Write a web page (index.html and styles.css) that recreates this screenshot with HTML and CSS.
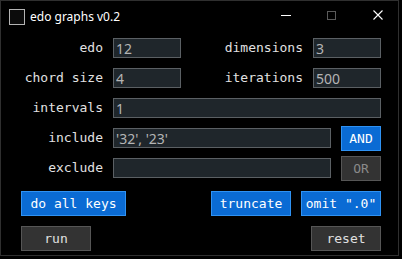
FILE: index.html
```html
<!DOCTYPE html>
<html>
<head>
<meta charset="utf-8">
<link rel="stylesheet" href="styles.css">
</head>
<body>
<div class="window">
  <div class="titlebar">
    <span class="app-icon"></span>
    <span class="title">edo graphs v0.2</span>
    <div class="controls">
      <svg class="ctl" width="10" height="10" viewBox="0 0 10 10"><line x1="0" y1="5.5" x2="10" y2="5.5" stroke="#ffffff" stroke-width="1"/></svg>
      <svg class="ctl" width="10" height="10" viewBox="0 0 10 10"><rect x="0.5" y="1.5" width="8" height="8" fill="none" stroke="#5a5a5a" stroke-width="1"/></svg>
      <svg class="ctl" width="10" height="10" viewBox="0 0 10 10"><path d="M0.5 0.5 L9.5 9.5 M9.5 0.5 L0.5 9.5" stroke="#ffffff" stroke-width="1.1" fill="none"/></svg>
    </div>
  </div>
  <div class="content">
    <div class="form-row">
      <label class="lbl">edo</label>
      <input class="field" type="text" value="12">
      <label class="lbl">dimensions</label>
      <input class="field" type="text" value="3">
    </div>
    <div class="form-row">
      <label class="lbl">chord size</label>
      <input class="field" type="text" value="4">
      <label class="lbl">iterations</label>
      <input class="field" type="text" value="500">
    </div>
    <div class="form-row">
      <label class="lbl">intervals</label>
      <input class="field wide" type="text" value="1">
    </div>
    <div class="form-row">
      <label class="lbl">include</label>
      <div class="combo">
        <input class="field grow" type="text" value="'32', '23'">
        <button class="btn blue small">AND</button>
      </div>
    </div>
    <div class="form-row">
      <label class="lbl">exclude</label>
      <div class="combo">
        <input class="field grow" type="text" value="">
        <button class="btn gray small dim">OR</button>
      </div>
    </div>
    <div class="btn-row first">
      <button class="btn blue keys">do all keys</button>
      <div class="btn-group">
        <button class="btn blue opt">truncate</button>
        <button class="btn blue opt">omit ".0"</button>
      </div>
    </div>
    <div class="btn-row">
      <button class="btn gray act">run</button>
      <button class="btn gray act">reset</button>
    </div>
  </div>
</div>
</body>
</html>
```
FILE: styles.css
```css
* { box-sizing: border-box; }
html, body { margin: 0; padding: 0; background: #000; }
.window {
  width: 399px;
  height: 256px;
  border: 1px solid #2f2f2f;
  background: #000;
  display: flex;
  flex-direction: column;
}
.titlebar {
  height: 32px;
  display: flex;
  align-items: center;
  padding-left: 8px;
}
.app-icon {
  width: 16px;
  height: 16px;
  border: 1px solid #b4b4b4;
  background: #0c0c0c;
}
.title {
  margin-left: 5px;
  font-family: "Noto Sans", "Open Sans", sans-serif;
  font-size: 12px;
  color: #ffffff;
  margin-top: -1px;
}
.controls {
  margin-left: auto;
  align-self: flex-start;
  display: flex;
  gap: 36px;
  padding-top: 9px;
  padding-right: 15px;
}
.ctl { display: block; }
.content {
  padding: 5px 17px 0 10px;
  display: flex;
  flex-direction: column;
  gap: 10px;
}
.form-row {
  display: grid;
  grid-template-columns: 92px 68px 112px 68px;
  column-gap: 10px;
  height: 20px;
  align-items: center;
}
.lbl {
  font-family: "DejaVu Sans Mono", monospace;
  font-size: 13px;
  color: #e2e2e2;
  text-align: right;
  line-height: 20px;
}
.field {
  height: 20px;
  width: 100%;
  border: 1px solid #5b6064;
  background: #1f262b;
  color: #b4b4b4;
  font-family: "Noto Sans", "Open Sans", sans-serif;
  font-size: 14px;
  padding: 0 2px;
  outline: none;
  margin: 0;
}
.wide { grid-column: 2 / 5; }
.combo {
  grid-column: 2 / 5;
  display: flex;
  align-items: center;
  gap: 10px;
  height: 20px;
}
.grow { flex: 1; }
.btn {
  font-family: "DejaVu Sans Mono", monospace;
  font-size: 13px;
  height: 25px;
  padding: 0;
  margin: 0;
  cursor: pointer;
}
.blue {
  background: #0a6bd4;
  border: 1px solid #2f92f3;
  color: #ffffff;
}
.gray {
  background: #333333;
  border: 1px solid #565656;
  color: #e0e0e0;
}
.dim { color: #8a8a8a; }
.small { width: 40px; flex: none; }
.btn-row {
  display: flex;
  justify-content: space-between;
  margin-left: 10px;
}
.btn-row.first { margin-top: 3px; }
.btn-group { display: flex; gap: 10px; }
.keys { width: 105px; }
.opt { width: 80px; }
.act { width: 70px; }
```
